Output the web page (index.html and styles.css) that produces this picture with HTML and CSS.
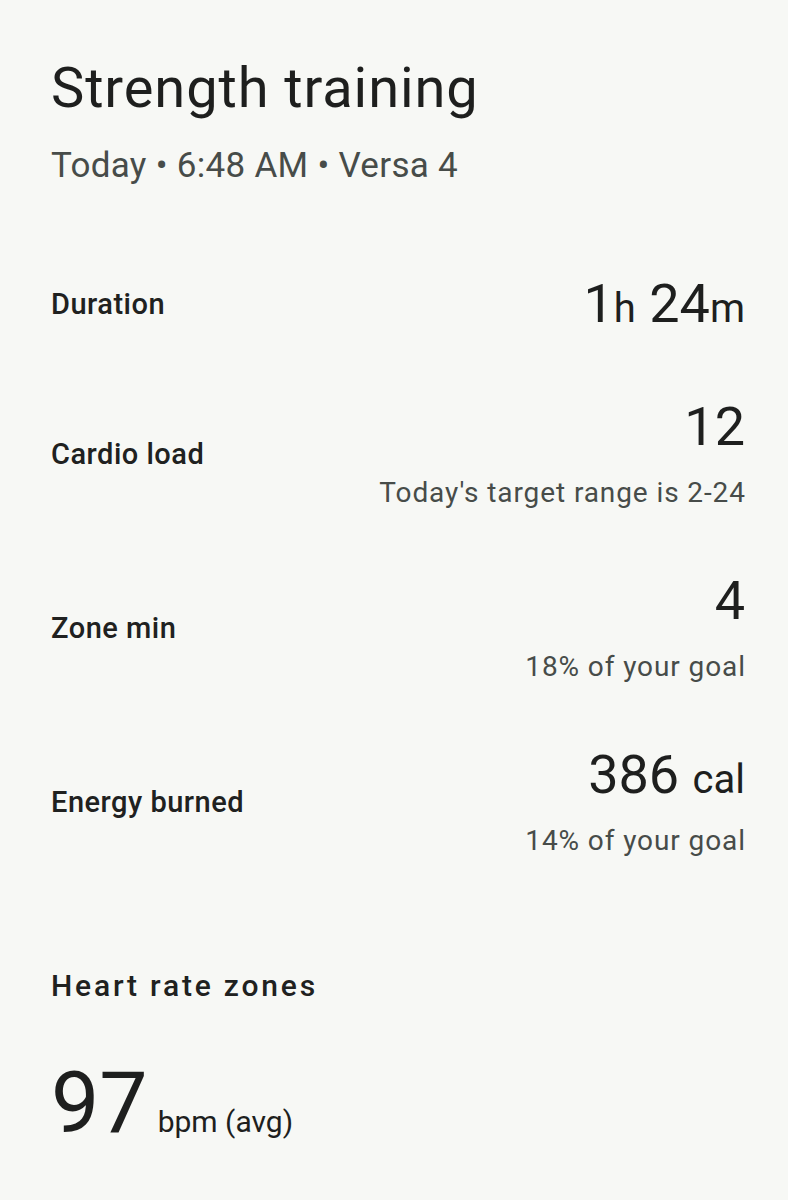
FILE: index.html
```html
<!DOCTYPE html>
<html lang="en">
<head>
    <meta charset="UTF-8">
    <meta name="viewport" content="width=device-width, initial-scale=1.0">
    <title>Strength training</title>
    <link rel="stylesheet" href="styles.css">
</head>
<body>
    <div class="page">
        <header class="head">
            <h1 class="title">Strength training</h1>
            <p class="meta">Today • 6:48 AM • Versa 4</p>
        </header>

        <section class="stats">
            <div class="row single">
                <span class="label">Duration</span>
                <div class="val">
                    <div class="num">1<small>h</small> 24<small>m</small></div>
                </div>
            </div>
            <div class="row">
                <span class="label">Cardio load</span>
                <div class="val">
                    <div class="num">12</div>
                    <div class="sub">Today's target range is 2-24</div>
                </div>
            </div>
            <div class="row">
                <span class="label">Zone min</span>
                <div class="val">
                    <div class="num">4</div>
                    <div class="sub">18% of your goal</div>
                </div>
            </div>
            <div class="row">
                <span class="label">Energy burned</span>
                <div class="val">
                    <div class="num">386 <small>cal</small></div>
                    <div class="sub">14% of your goal</div>
                </div>
            </div>
        </section>

        <section class="hr">
            <h2 class="hr-title">Heart rate zones</h2>
            <div class="avg">
                <span class="avg-num">97</span>
                <span class="avg-unit">bpm (avg)</span>
            </div>
        </section>
    </div>
</body>
</html>
```

FILE: styles.css
```css
/* 운동 상세 화면 */
body {
    margin: 0;
    background: #f7f8f5;
    color: #1e1f1e;
    font-family: Roboto, "Noto Sans", sans-serif;
}
.page { padding: 54px 43px 40px 51px; }

.title {
    margin: 0; font-size: 56px; line-height: 68px; font-weight: 400;
    letter-spacing: 0.9px;
}
.meta {
    margin: 22px 0 0; font-size: 35px; line-height: 44px;
    color: #474c49; letter-spacing: 0.3px;
}

.stats {
    display: flex; flex-direction: column;
    gap: 60px; margin-top: 86px;
}
.row {
    display: flex; justify-content: space-between; align-items: center;
}
.row.single {margin-bottom: 3px;}
.label {font-size: 29px; font-weight: 500; letter-spacing: 0.5px; color: #202120;}
.val {text-align: right;}
.num {font-size: 54px; line-height: 60px;}
/* 단위 글자가 줄 높이를 늘리지 않도록 */
.num small {font-size: 40px; line-height: 1;}
.sub {
    margin: 18px -0.9px 0 0; font-size: 28px; line-height: 36px;
    color: #474c49; letter-spacing: 0.9px;
}

.hr {margin-top: 107px;}
.hr-title {
    margin: 0; font-size: 30px; line-height: 40px; font-weight: 500;
    letter-spacing: 2.8px; color: #202120;
}
.avg {
    display: flex; align-items: baseline; gap: 10px;
    margin-top: 54px;
}
.avg-num {font-size: 86px; line-height: 1;}
.avg-unit {font-size: 30px;}
```
